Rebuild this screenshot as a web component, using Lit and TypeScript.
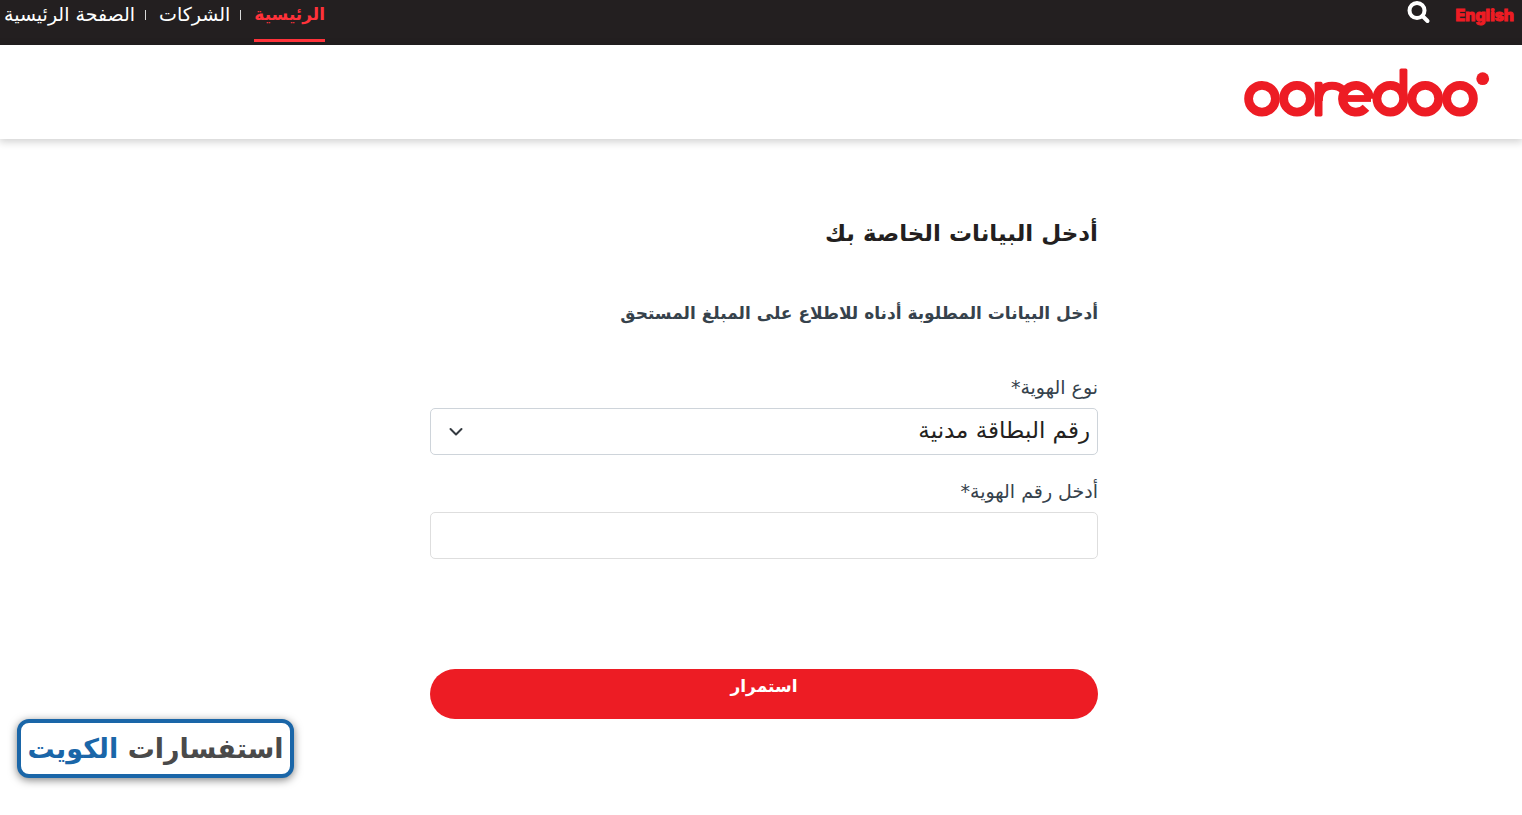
import { LitElement, html, css } from "lit";
import { customElement, state } from "lit/decorators.js";

interface NavLink {
  label: string;
  active: boolean;
}

@customElement("site-topbar")
class SiteTopbar extends LitElement {
  static styles = css`
    :host {
      display: block;
      background: #231f20;
    }
    .bar {
      display: flex;
      justify-content: space-between;
      align-items: flex-start;
      height: 45px;
      padding: 0 8px 0 4px;
      box-sizing: border-box;
    }
    .tools,
    .links {
      display: flex;
      align-items: flex-start;
    }
    .tools {
      gap: 24px;
    }
    .lang {
      font: 800 16px/30px "Inter", "Open Sans", sans-serif;
      color: #ed1c24;
      -webkit-text-stroke: 1px #ed1c24;
      text-decoration: none;
    }
    .search {
      display: block;
      padding: 1px 0 0;
      border: 0;
      background: none;
      color: #fff;
      cursor: pointer;
    }
    .search svg {
      display: block;
    }
    .links {
      list-style: none;
      margin: 0;
      padding: 0;
    }
    .item {
      display: flex;
      align-items: flex-start;
    }
    .item + .item::before {
      content: "";
      width: 1px;
      height: 10px;
      margin: 10px 13px 0 10px;
      background: #d8d8d8;
    }
    .link {
      height: 42px;
      box-sizing: border-box;
      font-size: 19px;
      line-height: 28px;
      color: #fff;
      text-decoration: none;
      white-space: nowrap;
    }
    .active {
      font-size: 17px;
      font-weight: 700;
      color: #ff323a;
      border-bottom: 3px solid #ff323a;
    }
  `;

  private links: NavLink[] = [
    { label: "الرئيسية", active: true },
    { label: "الشركات", active: false },
    { label: "الصفحة الرئيسية", active: false },
  ];

  render() {
    return html`
      <div class="bar">
        <div class="tools">
          <a class="lang" href="#en" lang="en">English</a>
          <button class="search" type="button" aria-label="بحث">
            <svg width="24" height="24" viewBox="0 0 24 24" fill="none" stroke="currentColor" stroke-width="4">
              <circle cx="10" cy="9.500" r="7.500" />
              <path d="M15.500 15L20.500 20" stroke-linecap="round" />
            </svg>
          </button>
        </div>
        <nav>
          <ul class="links">
            ${this.links.map(
              (l) => html`<li class="item">
                <a class="link ${l.active ? "active" : ""}" href="#">${l.label}</a>
              </li>`
            )}
          </ul>
        </nav>
      </div>
    `;
  }
}

@customElement("brand-header")
class BrandHeader extends LitElement {
  static styles = css`
    :host {
      display: block;
      background: #fff;
      box-shadow: 0 2px 8px 1px rgba(0, 0, 0, 0.18);
    }
    .brand {
      display: flex;
      padding: 23px 32px 22px;
    }
    .logo,
    .logo svg {
      display: block;
    }
  `;

  render() {
    return html`
      <div class="brand">
        <a class="logo" href="#" aria-label="Ooredoo">
          <svg width="246" height="49" viewBox="0 0 246 49" fill="none" stroke="#ed1c24" stroke-width="8.800">
            <circle cx="18" cy="30.700" r="13.400" />
            <circle cx="53" cy="30.700" r="13.400" />
            <rect x="70.700" y="13.700" width="7.800" height="34.700" rx="1.600" fill="#ed1c24" stroke="none" />
            <path d="M74.800 33C74.800 22.500 80 17.800 88 17.800C92 17.800 96 19 99 22" stroke-width="8" />
            <path d="M98.300 30.500H127" stroke-width="6.800" />
            <path d="M125.400 30.700A13.400 13.400 0 1 0 122 39.700" />
            <circle cx="146.300" cy="30.700" r="13.400" />
            <rect x="155.500" y="0.400" width="7.900" height="31" rx="1.600" fill="#ed1c24" stroke="none" />
            <circle cx="181.300" cy="30.700" r="13.400" />
            <circle cx="216" cy="30.700" r="13.400" />
            <circle cx="238.700" cy="10.700" r="6.400" fill="#ed1c24" stroke="none" />
          </svg>
        </a>
      </div>
    `;
  }
}

@customElement("dues-form")
class DuesForm extends LitElement {
  static styles = css`
    :host {
      display: block;
    }
    .form {
      display: flex;
      flex-direction: column;
      max-width: 668px;
      margin: 0 auto;
      padding-left: 6px;
    }
    .title {
      margin: 0 0 52px;
      font-size: 23px;
      line-height: 32px;
      font-weight: 700;
      color: #231f20;
    }
    .lead {
      margin: 0 0 50px;
      font-size: 17px;
      line-height: 24px;
      font-weight: 700;
      color: #36424c;
    }
    .label {
      margin-bottom: 9px;
      font-size: 19px;
      line-height: 24px;
      color: #36424c;
    }
    .control {
      position: relative;
      margin-bottom: 24px;
    }
    .field {
      display: block;
      width: 100%;
      height: 47px;
      box-sizing: border-box;
      padding: 0 7px 3px;
      border: 1px solid #ced4da;
      border-radius: 5px;
      background: #fff;
      font-family: inherit;
      font-size: 23px;
      line-height: 36px;
      color: #231f20;
      appearance: none;
    }
    .plain {
      border-color: #dedede;
    }
    .chevron {
      position: absolute;
      left: 18px;
      top: 16px;
      pointer-events: none;
    }
    .submit {
      height: 50px;
      margin-top: 86px;
      padding: 0 0 16px;
      border: 0;
      border-radius: 25px;
      background: #ed1c24;
      font-family: inherit;
      font-size: 17px;
      font-weight: 700;
      color: #fff;
      cursor: pointer;
    }
  `;

  @state() private idNumber = "";

  render() {
    return html`
      <form class="form" @submit=${(e: Event) => e.preventDefault()}>
        <h1 class="title">أدخل البيانات الخاصة بك</h1>
        <p class="lead">أدخل البيانات المطلوبة أدناه للاطلاع على المبلغ المستحق</p>
        <label class="label" for="id-type">نوع الهوية*</label>
        <div class="control">
          <select class="field" id="id-type">
            <option>رقم البطاقة مدنية</option>
          </select>
          <svg class="chevron" width="16" height="16" viewBox="0 0 16 16" fill="none" stroke="#343a40" stroke-width="2" stroke-linecap="round" stroke-linejoin="round">
            <path d="M2.500 5l5.500 5.500 5.500-5.500" />
          </svg>
        </div>
        <label class="label" for="id-number">أدخل رقم الهوية*</label>
        <div class="control">
          <input
            class="field plain"
            id="id-number"
            type="text"
            .value=${this.idNumber}
            @input=${(e: Event) => (this.idNumber = (e.target as HTMLInputElement).value)}
          />
        </div>
        <button class="submit" type="submit">استمرار</button>
      </form>
    `;
  }
}

@customElement("app-root")
class AppRoot extends LitElement {
  static styles = css`
    :host {
      display: block;
      min-height: 100vh;
      background: #fff;
      font-family: "DejaVu Sans", sans-serif;
    }
    .main {
      padding: 78px 16px 88px;
    }
    .stamp {
      position: absolute;
      left: 17px;
      bottom: 37px;
      display: flex;
      align-items: center;
      justify-content: center;
      width: 277px;
      height: 59px;
      box-sizing: border-box;
      border: 4px solid #1a66a8;
      border-radius: 12px;
      background: #fff;
      box-shadow: 0 2px 8px rgba(0, 0, 0, 0.5);
      font-size: 27px;
      line-height: 40px;
      font-weight: 700;
      color: #4a4a4a;
      white-space: pre;
    }
    .accent {
      color: #1a66a8;
    }
  `;

  render() {
    return html`
      <div dir="rtl" lang="ar">
        <site-topbar></site-topbar>
        <brand-header></brand-header>
        <main class="main"><dues-form></dues-form></main>
        <div class="stamp"><span>استفسارات <span class="accent">الكويت</span></span></div>
      </div>
    `;
  }
}
